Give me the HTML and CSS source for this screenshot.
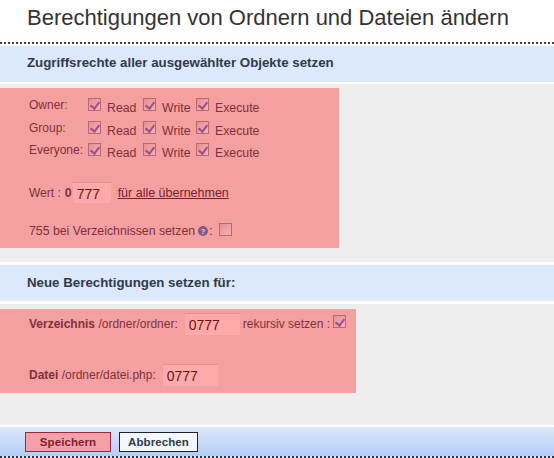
FILE: index.html
```html
<!DOCTYPE html>
<html lang="de">
<head>
<meta charset="utf-8">
<title>Berechtigungen</title>
<link rel="stylesheet" href="styles.css">
</head>
<body>
<h1 class="title">Berechtigungen von Ordnern und Dateien ändern</h1>
<div class="content">
  <h2 class="bar">Zugriffsrechte aller ausgewählter Objekte setzen</h2>
  <div class="panel panel-a">
    <div class="perms">
      <span class="who">Owner:</span>
      <input type="checkbox" class="cb" checked><span class="lbl">Read</span>
      <input type="checkbox" class="cb" checked><span class="lbl">Write</span>
      <input type="checkbox" class="cb" checked><span class="lbl">Execute</span>
      <span class="who">Group:</span>
      <input type="checkbox" class="cb" checked><span class="lbl">Read</span>
      <input type="checkbox" class="cb" checked><span class="lbl">Write</span>
      <input type="checkbox" class="cb" checked><span class="lbl">Execute</span>
      <span class="who">Everyone:</span>
      <input type="checkbox" class="cb" checked><span class="lbl">Read</span>
      <input type="checkbox" class="cb" checked><span class="lbl">Write</span>
      <input type="checkbox" class="cb" checked><span class="lbl">Execute</span>
    </div>
    <div class="wert">
      <span class="wert-label">Wert :</span><b class="zero">0</b><input class="field field-s" value="777"><a href="#" class="apply">für alle übernehmen</a>
    </div>
    <div class="dirs">
      <span>755 bei Verzeichnissen setzen</span>
      <svg class="help" width="10" height="10" viewBox="0 0 10 10"><circle cx="5" cy="5" r="5" fill="#7e5a8c"/><text x="5" y="8" font-size="8" font-weight="700" font-family="Liberation Sans" text-anchor="middle" fill="#f0c8d0">?</text></svg>
      <span>:</span>
      <input type="checkbox" class="cb">
    </div>
  </div>
  <h2 class="bar bar-2">Neue Berechtigungen setzen für:</h2>
  <div class="panel panel-b">
    <div class="line">
      <span><b>Verzeichnis</b> /ordner/ordner:</span><input class="field" value="0777"><span>rekursiv setzen :</span><input type="checkbox" class="cb cb-top" checked>
    </div>
    <div class="line line-2">
      <span><b>Datei</b> /ordner/datei.php:</span><input class="field" value="0777">
    </div>
  </div>
</div>
<div class="footer">
  <button class="btn btn-save">Speichern</button>
  <button class="btn">Abbrechen</button>
</div>
</body>
</html>
```
FILE: styles.css
```css
* { box-sizing: border-box; }
html, body { margin: 0; height: 458px; overflow: hidden; }
body {
  font-family: "Liberation Sans", Arial, sans-serif;
  font-size: 12.3px;
  color: #80303a;
  background: #fff;
  display: flex;
  flex-direction: column;
}
.title {
  margin: 0;
  height: 44px;
  padding: 6px 0 0 27px;
  font-size: 22px;
  line-height: 24px;
  font-weight: 400;
  color: #333;
  border-bottom: 2px dotted #444;
  white-space: nowrap;
}
.content {
  flex: 1;
  background: #eee;
}
.bar {
  margin: 0;
  height: 40px;
  padding-left: 27px;
  font-size: 13.3px;
  line-height: 34px;
  font-weight: 700;
  color: #2f3a4c;
  background: #dce8fb;
  border-top: 2px solid #fff;
  border-bottom: 2px solid #fff;
}
.bar-2 {
  height: 42px;
  margin-top: 14px;
  line-height: 36px;
  border-top: 3px solid #fff;
  border-bottom: 3px solid #fff;
}
.panel {
  background: #f4a0a0;
  padding-left: 29px;
}
.panel-a { width: 339px; height: 160px; padding-top: 10px; margin-top: 4px; }
.panel-b { width: 356px; height: 84px; padding-top: 4px; margin-top: 5px; font-size: 12px; }
.perms {
  display: grid;
  grid-template-columns: 59px 19px 36px 19px 34px 19px auto;
  justify-content: start;
  grid-auto-rows: 22.5px;
  align-items: start;
}
.who { line-height: 14px; font-size: 12px; }
.lbl { line-height: 14px; padding-top: 3px; }
.cb {
  appearance: none;
  -webkit-appearance: none;
  position: relative;
  width: 13px;
  height: 13px;
  margin: 0;
  background: linear-gradient(135deg, #e88e92, #f6b2b6);
  border: 1px solid #b8686e;
}
.cb:checked::after {
  content: "";
  position: absolute;
  left: 3px;
  top: 1px;
  width: 4px;
  height: 7px;
  border: solid #9a5090;
  border-width: 0 2px 2px 0;
  transform: rotate(38deg);
}
.wert {
  display: flex;
  align-items: center;
  height: 24px;
  margin-top: 15px;
}
.wert-label { font-size: 12px; }
.zero { margin: 0 1px 0 4px; }
.field {
  width: 55px;
  height: 22px;
  margin: 0;
  padding: 1px 3px 0 4px;
  border: 0;
  border-top: 1px solid #f08c8c;
  background: #ffaaaa;
  color: #6a1414;
  font: 14px "Liberation Sans", Arial, sans-serif;
}
.field-s { width: 38px; height: 21px; }
.apply { margin-left: 7px; color: #7a2030; font-size: 12.5px; }
.dirs {
  display: flex;
  align-items: center;
  height: 16px;
  margin-top: 18px;
}
.help { margin-left: 3px; margin-right: 1px; }
.dirs .cb { margin-left: 6px; margin-top: -3px; }
.line {
  display: flex;
  align-items: flex-start;
  height: 22px;
}
.line > span { line-height: 22px; }
.line > .field { margin: 0 3px 0 7px; }
.line-2 { margin-top: 29px; }
.cb-top { margin-top: 2px; margin-left: 3px; }
.footer {
  height: 33px;
  padding: 5px 0 0 25px;
  display: flex;
  gap: 8px;
  align-items: flex-start;
  background: linear-gradient(#dde8fc, #b4cdf6);
  border-top: 2px solid #fff;
  border-bottom: 2px dotted #333;
}
.btn {
  height: 20px;
  padding: 0 8px;
  font: 700 11.5px "Liberation Sans", Arial, sans-serif;
  color: #2f3a4c;
  background: #f4f7fd;
  border: 1px solid #223;
  border-radius: 0;
  letter-spacing: 0.1px;
}
.btn-save {
  width: 86px;
  color: #80202c;
  background: #f4a0a8;
  border-color: #a02838;
}
```
